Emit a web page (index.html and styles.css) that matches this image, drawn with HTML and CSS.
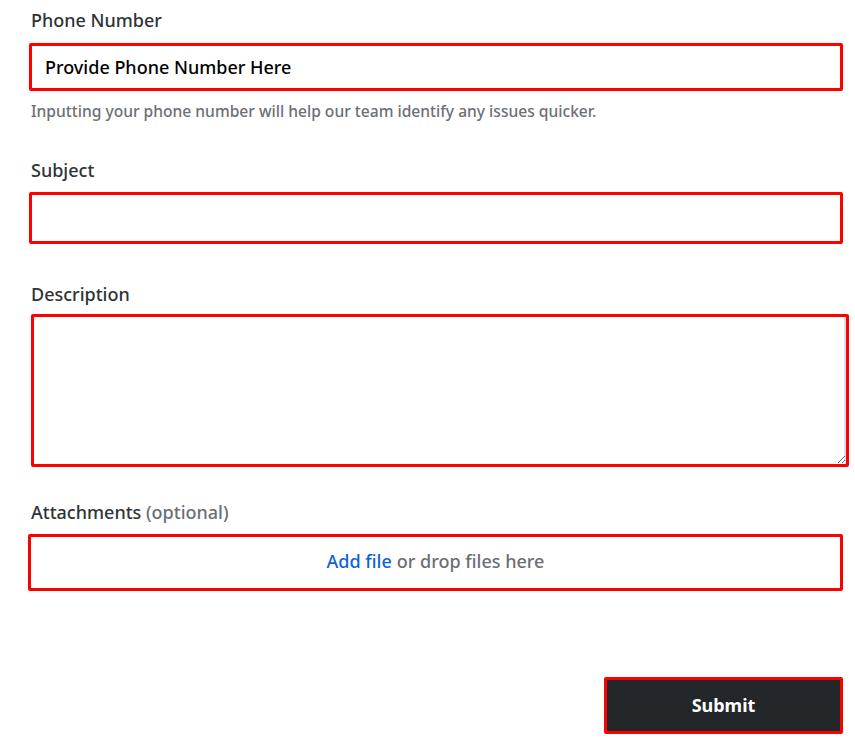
FILE: index.html
```html
<!DOCTYPE html>
<html lang="en">
<head>
<meta charset="utf-8">
<title>Support form</title>
<link rel="stylesheet" href="styles.css">
</head>
<body>
<form class="form">
  <div class="field field-phone">
    <label class="label" for="phone">Phone Number</label>
    <div class="input input-phone" id="phone">Provide Phone Number Here</div>
    <p class="help">Inputting your phone number will help our team identify any issues quicker.</p>
  </div>
  <div class="field field-subject">
    <label class="label" for="subject">Subject</label>
    <div class="input input-subject" id="subject"></div>
  </div>
  <div class="field field-desc">
    <label class="label" for="desc">Description</label>
    <textarea class="textarea" id="desc"></textarea>
  </div>
  <div class="field field-attach">
    <span class="label">Attachments <span class="optional">(optional)</span></span>
    <div class="dropzone"><span class="link">Add file</span> or drop files here</div>
  </div>
  <div class="actions">
    <button type="button" class="submit">Submit</button>
  </div>
</form>
</body>
</html>
```
FILE: styles.css
```css
html, body {
  margin: 0;
  padding: 0;
  background: #ffffff;
}
body {
  font-family: "Noto Sans", "Open Sans", sans-serif;
  color: #2e3338;
}
.form {
  display: flex;
  flex-direction: column;
  padding: 8px 0 0 29px;
  width: 814px;
}
.field {
  display: flex;
  flex-direction: column;
}
.label {
  display: block;
  margin-left: 2px;
  font-size: 18px;
  line-height: 24px;
  font-weight: 500;
  color: #2e3338;
}
.optional {
  color: #6a6e75;
}
.input {
  box-sizing: border-box;
  border: 3px solid #ff0000;
  border-radius: 2px;
  background: #fff;
  box-shadow: 0 0 5px rgba(90, 110, 255, 0.16);
  font-size: 18px;
  font-weight: 500;
  color: #000;
  display: flex;
  align-items: center;
  padding: 0 13px;
}
.input-phone {
  margin-top: 11px;
  height: 48px;
}
.help {
  margin: 10px 0 0 2px;
  font-size: 15.6px;
  line-height: 20px;
  font-weight: 500;
  color: #6c6f75;
}
.field-subject {
  margin-top: 37px;
}
.input-subject {
  margin-top: 10px;
  height: 52px;
  box-shadow: none;
}
.field-desc {
  margin-top: 38px;
}
.textarea {
  box-sizing: border-box;
  margin: 8px 0 0 2px;
  width: 818px;
  height: 153px;
  border: 3px solid #ff0000;
  border-radius: 2px;
  box-shadow: inset -2px 0 0 #dfe3e8;
  resize: vertical;
  font-family: inherit;
  font-size: 16px;
}
.field-attach {
  margin-top: 33px;
}
.dropzone {
  box-sizing: border-box;
  margin: 10px 0 0 -1px;
  width: 815px;
  height: 57px;
  padding-bottom: 4px;
  border: 3px solid #ff0000;
  border-radius: 2px;
  display: flex;
  align-items: center;
  justify-content: center;
  font-size: 18px;
  color: #6a6e75;
  font-weight: 500;
}
.link {
  color: #0b63d6;
  margin-right: 5px;
}
.actions {
  display: flex;
  justify-content: flex-end;
  margin-top: 86px;
}
.submit {
  box-sizing: border-box;
  width: 239px;
  height: 57px;
  padding-bottom: 2px;
  background: #23272a;
  border: 3px solid #ff0000;
  border-radius: 2px;
  color: #ffffff;
  font-family: inherit;
  font-size: 18px;
  font-weight: 700;
  cursor: pointer;
}
```
